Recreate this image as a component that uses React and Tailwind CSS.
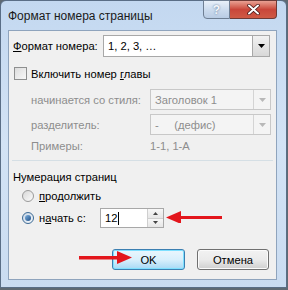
import React from "react";

const font = { fontFamily: '"Liberation Sans", Arial, sans-serif' };

function DropBtn({ disabled }) {
  return (
    <div
      className={
        "w-[17px] h-full flex items-center justify-center border-l " +
        (disabled
          ? "border-[#d4d4d4] bg-[#f4f4f4]"
          : "border-[#a8a8a8] bg-gradient-to-b from-[#f2f2f2] to-[#d8d8d8]")
      }
    >
      <svg width="7" height="4" viewBox="0 0 7 4">
        <path d="M0 0H7L3.5 4Z" fill={disabled ? "#b8b8b8" : "#000"} />
      </svg>
    </div>
  );
}

export default function App() {
  return (
    <div className="relative w-[288px] h-[290px] bg-[#5f6a73] overflow-hidden whitespace-nowrap" style={font}>
      <div className="w-[287px] h-[288px] border border-[#5a6e86] rounded-t-[6px] bg-gradient-to-b from-[#c3d8f0] via-[#d3e3f5] to-[#cadcf1] flex flex-col">
        {/* Title bar */}
        <div className="h-[29px] flex items-start shrink-0">
          <div className="flex-1 pl-[7px] pt-[7px] text-[12px] leading-[16px] text-[#1a1a1a]">
            Формат номера страницы
          </div>
          <div className="flex mr-[9px] mt-[-1px]">
            <div className="w-[27px] h-[19px] border border-[#6f7f93] rounded-bl-[4px] bg-gradient-to-b from-[#e8f0f9] via-[#cddcee] to-[#b9cce4] flex items-center justify-center text-[12px] font-bold text-[#f4f7fb]" style={{ textShadow: "0 0 2px #506b8c" }}>
              ?
            </div>
            <div className="w-[47px] h-[19px] border border-l-0 border-[#6e3a36] rounded-br-[4px] bg-gradient-to-b from-[#e8a093] via-[#c9463a] to-[#cf5a45] flex items-center justify-center">
              <svg width="13" height="11" viewBox="0 0 13 11">
                <path d="M2 1.5L11 9.5M11 1.5L2 9.5" stroke="#3c1010" strokeWidth="3.4" strokeLinecap="round" />
                <path d="M2 1.5L11 9.5M11 1.5L2 9.5" stroke="#ffffff" strokeWidth="2" strokeLinecap="round" />
              </svg>
            </div>
          </div>
        </div>

        {/* Content panel */}
        <div className="ml-[7px] mr-[9px] h-[250px] border border-[#8fa4bd] bg-[#f0f0f0] flex flex-col text-[11.2px] leading-[14px] text-black">
          {/* Row 1 */}
          <div className="mt-[4px] flex items-center h-[22px] pl-[4px] pr-[4px]">
            <div className="w-[90px]"><span className="underline">Ф</span>ормат номера:</div>
            <div className="w-[167px] h-[22px] border border-[#a8a8a8] bg-white flex items-center">
              <div className="flex-1 pl-[4px]">1, 2, 3, …</div>
              <DropBtn />
            </div>
          </div>

          {/* Checkbox */}
          <div className="mt-[10px] flex items-center h-[13px] pl-[5px]">
            <div className="w-[13px] h-[13px] border border-[#8e8f8f] bg-gradient-to-br from-[#dcdcdc] to-[#f8f8f8]" />
            <div className="ml-[4px]">Включить номер <span className="underline">г</span>лавы</div>
          </div>

          {/* Disabled rows */}
          <div className="mt-[9px] flex items-center h-[21px] pl-[22px] pr-[4px] text-[#8d8d8d]">
            <div className="w-[119px]">начинается со стиля:</div>
            <div className="w-[121px] h-[21px] border border-[#c8c8c8] bg-[#f4f4f4] flex items-center">
              <div className="flex-1 pl-[4px]">Заголовок 1</div>
              <DropBtn disabled />
            </div>
          </div>
          <div className="mt-[4px] flex items-center h-[21px] pl-[22px] pr-[4px] text-[#8d8d8d]">
            <div className="w-[119px]">разделитель:</div>
            <div className="w-[121px] h-[21px] border border-[#c8c8c8] bg-[#f4f4f4] flex items-center">
              <div className="flex-1 pl-[4px]">-&nbsp;&nbsp;&nbsp;&nbsp;&nbsp;(дефис)</div>
              <DropBtn disabled />
            </div>
          </div>
          <div className="mt-[4px] flex items-center h-[14px] pl-[22px] text-[#8d8d8d]">
            <div className="w-[119px]">Примеры:</div>
            <div>1-1, 1-A</div>
          </div>

          {/* Separator */}
          <div className="mt-[7px] mx-[3px] h-[2px] border-t border-[#d5dfe5] border-b-white" />

          <div className="mt-[8px] pl-[4px] h-[14px] flex items-center">Нумерация страниц</div>

          {/* Radio 1 */}
          <div className="mt-[5px] pl-[13px] h-[13px] flex items-center">
            <div className="w-[12px] h-[12px] rounded-full border border-[#9a9a9a] bg-gradient-to-br from-[#d8d8d8] to-[#fbfbfb]" />
            <div className="ml-[5px]"><span className="underline">п</span>родолжить</div>
          </div>

          {/* Radio 2 */}
          <div className="mt-[6px] pl-[13px] h-[20px] flex items-center">
            <div className="w-[12px] h-[12px] rounded-full border border-[#3d6a94] bg-gradient-to-br from-[#c9d7e6] to-[#f5f8fb] flex items-center justify-center">
              <div className="w-[6px] h-[6px] rounded-full bg-gradient-to-br from-[#7fb2e0] to-[#1f4f86]" />
            </div>
            <div className="ml-[5px] w-[61px]">н<span className="underline">а</span>чать с:</div>
            <div className="w-[64px] h-[20px] border border-[#a8a8a8] bg-white flex">
              <div className="flex-1 pl-[4px] flex items-center">12<span className="inline-block w-px h-[13px] bg-black ml-px" /></div>
              <div className="w-[16px] flex flex-col border-l border-[#cfcfcf]">
                <div className="flex-1 flex items-center justify-center border-b border-[#cfcfcf] bg-gradient-to-b from-[#f7f7f7] to-[#e6e6e6]">
                  <svg width="5" height="3" viewBox="0 0 5 3"><path d="M0 3H5L2.5 0Z" fill="#444" /></svg>
                </div>
                <div className="flex-1 flex items-center justify-center bg-gradient-to-b from-[#f7f7f7] to-[#e6e6e6]">
                  <svg width="5" height="3" viewBox="0 0 5 3"><path d="M0 0H5L2.5 3Z" fill="#444" /></svg>
                </div>
              </div>
            </div>
          </div>

          {/* Buttons */}
          <div className="mt-[21px] flex justify-end gap-[12px] pr-[7px]">
            <div className="w-[73px] h-[21px] rounded-[3px] border border-[#3c7fb1] bg-gradient-to-b from-[#eaf6fd] via-[#d9f0fc] to-[#a7d9f5] flex items-center justify-center shadow-[inset_0_0_0_1px_#7ee0ff]">
              OK
            </div>
            <div className="w-[72px] h-[21px] rounded-[3px] border border-[#707070] bg-gradient-to-b from-[#f2f2f2] via-[#ebebeb] to-[#cfcfcf] flex items-center justify-center shadow-[inset_0_0_0_1px_#fbfbfb]">
              Отмена
            </div>
          </div>
        </div>
      </div>

      {/* Red arrows (annotation overlay) */}
      <svg className="absolute left-[166px] top-[211px]" width="58" height="12" viewBox="0 0 58 12">
        <path d="M14 5H56V8H14Z" fill="#e3161c" />
        <path d="M0 6.5L15 0V13Z" fill="#e3161c" />
      </svg>
      <svg className="absolute left-[79px] top-[251px]" width="54" height="13" viewBox="0 0 54 13">
        <path d="M0 5H40V8.5H0Z" fill="#e3161c" />
        <path d="M53 6.5L38 0V13Z" fill="#e3161c" />
      </svg>
    </div>
  );
}
